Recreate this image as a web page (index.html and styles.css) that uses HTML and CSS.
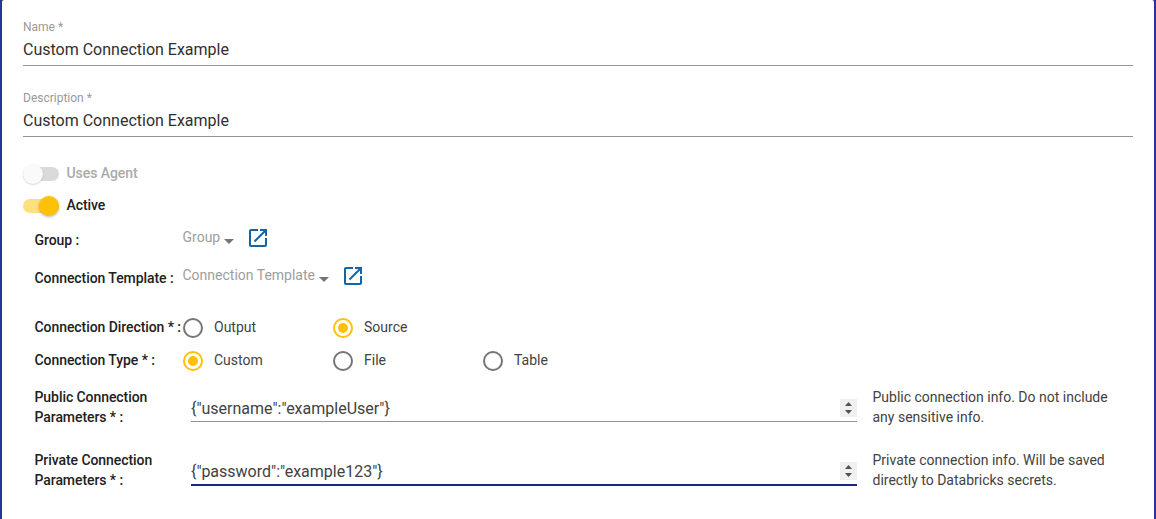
FILE: index.html
```html
<!DOCTYPE html>
<html lang="en">
<head>
<meta charset="utf-8">
<title>Connection</title>
<link rel="stylesheet" href="styles.css">
</head>
<body>
<form class="card">
  <div class="field"><span class="field-label">Name *</span><span class="field-value">Custom Connection Example</span></div>
  <div class="field field-next"><span class="field-label">Description *</span><span class="field-value">Custom Connection Example</span></div>

  <div class="toggles">
    <div class="toggle disabled"><span class="track"><span class="thumb"></span></span><span class="toggle-text">Uses Agent</span></div>
    <div class="toggle on"><span class="track"><span class="thumb"></span></span><span class="toggle-text">Active</span></div>
  </div>

  <div class="row select-row group-row">
    <span class="label">Group :</span>
    <div class="select"><span class="select-text">Group</span><span class="arrow"></span>
      <svg class="open" viewBox="3 3 18 18"><path d="M19 19H5V5h7V3H5c-1.11 0-2 .9-2 2v14c0 1.1.89 2 2 2h14c1.1 0 2-.9 2-2v-7h-2v7zM14 3v2h3.59l-9.83 9.83 1.41 1.41L19 6.41V10h2V3h-7z"/></svg>
    </div>
  </div>
  <div class="row select-row template-row">
    <span class="label">Connection Template :</span>
    <div class="select"><span class="select-text">Connection Template</span><span class="arrow"></span>
      <svg class="open" viewBox="3 3 18 18"><path d="M19 19H5V5h7V3H5c-1.11 0-2 .9-2 2v14c0 1.1.89 2 2 2h14c1.1 0 2-.9 2-2v-7h-2v7zM14 3v2h3.59l-9.83 9.83 1.41 1.41L19 6.41V10h2V3h-7z"/></svg>
    </div>
  </div>

  <div class="row radio-row">
    <span class="label">Connection Direction * :</span>
    <span class="radio"><i class="ring"></i>Output</span>
    <span class="radio"><i class="ring checked"></i>Source</span>
  </div>
  <div class="row radio-row">
    <span class="label">Connection Type * :</span>
    <span class="radio"><i class="ring checked"></i>Custom</span>
    <span class="radio"><i class="ring"></i>File</span>
    <span class="radio"><i class="ring"></i>Table</span>
  </div>

  <div class="row param-row">
    <span class="label">Public Connection<br>Parameters * :</span>
    <div class="input"><span class="input-text">{"username":"exampleUser"}</span><svg class="spin" viewBox="0 0 17 18"><path d="M8.5 3l3.5 4H5zM5 11h7l-3.5 4z"/></svg></div>
    <p class="hint">Public connection info. Do not include<br>any sensitive info.</p>
  </div>
  <div class="row param-row">
    <span class="label">Private Connection<br>Parameters * :</span>
    <div class="input focused"><span class="input-text">{"password":"example123"}</span><svg class="spin" viewBox="0 0 17 18"><path d="M8.5 3l3.5 4H5zM5 11h7l-3.5 4z"/></svg></div>
    <p class="hint">Private connection info. Will be saved<br>directly to Databricks secrets.</p>
  </div>
</form>
</body>
</html>
```
FILE: styles.css
```css
* { box-sizing: border-box; }
body {
  margin: 0;
  height: 519px;
  overflow: hidden;
  padding: 0 2px;
  background: #283593;
  font: 14px/20px Roboto, sans-serif;
  color: #424242;
}
.card {
  height: 519px;
  padding: 18px 21px 0;
  background: #fff;
  border-radius: 2px 2px 0 0;
}
.field {
  display: flex;
  flex-direction: column;
  height: 48px;
  border-bottom: 1px solid #949494;
}
.field-next { margin-top: 23px; }
.field-label { font-size: 12px; line-height: 18px; color: #999; }
.field-value { font-size: 16px; line-height: 28px; color: #303030; }

.toggles { padding-top: 21px; }
.toggle { display: flex; align-items: center; height: 32px; gap: 7.5px; font-weight: 500; color: #212121; letter-spacing: -.07px; }
.toggle-text { margin-top: -2px; }
.toggle.disabled { color: #aaa; }
.track { display: flex; align-items: center; width: 36px; height: 14px; border-radius: 7px; background: #dadada; }
.thumb { flex: none; width: 20px; height: 20px; border-radius: 50%; background: #fafafa; box-shadow: 0 1px 2px rgba(0, 0, 0, .16); }
.on .track { justify-content: flex-end; background: #ffdf7e; }
.on .thumb { background: #ffc107; box-shadow: 0 1px 3px rgba(0, 0, 0, .3); }

.row { display: flex; padding-left: 11.5px; }
.label { flex: none; width: 148px; font-weight: 500; color: #212121; white-space: nowrap; letter-spacing: -.07px; }
.select-row { height: 38px; }
.select-row .label { padding-top: 8px; }
.template-row { height: 50px; }
.select { display: flex; align-items: flex-start; height: 30px; }
.select-text { padding-top: 5px; color: #9e9e9e; }
.arrow { margin: 17px 0 0 4px; border: 5px solid transparent; border-top-color: #757575; border-bottom: 0; }
.open { width: 18px; height: 18px; margin: 7px 0 0 15.5px; fill: #1565a5; }
.group-row .open { margin-left: 15px; }

.radio-row { height: 33px; align-items: center; padding-left: 12px; }
.radio-row .label { margin-left: -.5px; width: 148.5px; }
.radio { display: flex; align-items: center; width: 150px; gap: 11px; }
.ring { display: flex; align-items: center; justify-content: center; width: 20px; height: 20px; border: 2px solid #757575; border-radius: 50%; margin-top: 2px; }
.ring.checked { border-color: #ffc107; }
.ring.checked::after { content: ""; width: 10px; height: 10px; border-radius: 50%; background: #ffc107; }

.param-row { height: 63px; padding-top: 11px; }
.input {
  display: flex;
  align-items: flex-end;
  justify-content: space-between;
  width: 666px;
  height: 35px;
  margin-left: 8.5px;
  padding-bottom: 3px;
  border-bottom: 1px solid #949494;
}
.input-text { font-size: 16px; line-height: 18px; }
.input.focused { height: 36px; border-bottom: 2px solid #1a237e; }
.spin { width: 17px; height: 18px; margin-bottom: 1px; background: #f0f0f0; fill: #505050; }
.hint { margin: 0 0 0 15.5px; }
```
